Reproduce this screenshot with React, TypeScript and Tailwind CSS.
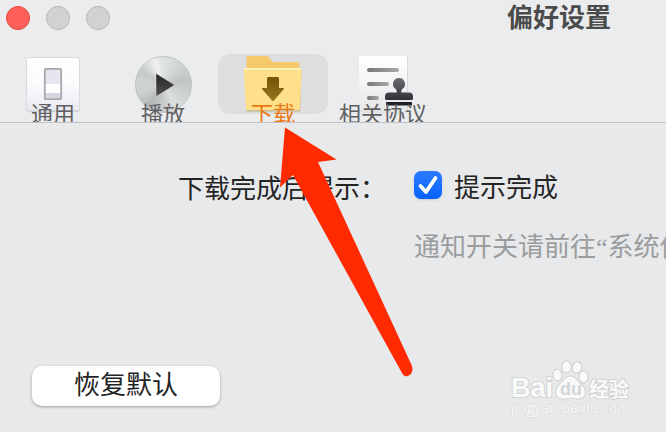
import React, { useState } from "react";

function GeneralIcon() {
  return (
    <svg width="60" height="60" viewBox="0 0 60 60" aria-hidden="true">
      <defs>
        <linearGradient id="general-plate" x1="0" y1="0" x2="0" y2="1">
          <stop offset="0" stopColor="#ffffff" />
          <stop offset="0.5" stopColor="#fbfbfd" />
          <stop offset="1" stopColor="#e9e9f1" />
        </linearGradient>
      </defs>
      <rect x="3.5" y="4.5" width="53" height="53" rx="2" fill="#b9b9bd" />
      <rect x="3.5" y="3.5" width="53" height="53" rx="2" fill="url(#general-plate)" stroke="#d9dadd" />
      <rect x="22" y="15" width="16" height="30" fill="#e6e6ee" />
      <rect x="22" y="30" width="16" height="9" fill="#ffffff" />
      <rect x="22" y="39" width="16" height="6" fill="#d6d5e2" />
      <rect x="21.8" y="14.8" width="16.4" height="30.4" rx="0.8" fill="none" stroke="#a9a9ab" strokeWidth="1.8" />
    </svg>
  );
}

function PlayIcon() {
  return (
    <div className="relative flex size-[60px] items-center justify-center">
      <div className="size-[57px] rounded-full border border-[#c0c3c4] bg-[conic-gradient(from_0deg,#dfe2e2,#d0d3d4_12%,#c0c4c5_22%,#cfd2d3_32%,#dcdedf_42%,#c8cccc_50%,#b4b9ba_60%,#cfd2d3_70%,#cdd1d1_78%,#c6cacb_84%,#eff0f0_94%,#dfe2e2)]" />
      <svg className="absolute inset-0" width="60" height="60" viewBox="0 0 60 60" aria-hidden="true">
        <defs>
          <linearGradient id="play-fill" x1="0" y1="0" x2="0" y2="1">
            <stop offset="0" stopColor="#262626" />
            <stop offset="1" stopColor="#505050" />
          </linearGradient>
        </defs>
        <path d="M23 20.500Q23 19.500 24 20L41 30.500Q41.500 31 41 31.500L24 42Q23 42.500 23 41.500Z" fill="url(#play-fill)" stroke="#e4e6e6" strokeWidth="0.500" />
      </svg>
    </div>
  );
}

function DownloadIcon() {
  return (
    <svg width="60" height="60" viewBox="0 0 60 60" aria-hidden="true">
      <defs>
        <linearGradient id="folder-arrow" x1="0" y1="0" x2="0" y2="1">
          <stop offset="0" stopColor="#735306" />
          <stop offset="1" stopColor="#96771d" />
        </linearGradient>
      </defs>
      <path d="M3.500 4Q3.500 2 5.500 2H23.500Q25 2 26 3.500L29.500 8H54.500Q56.500 8 56.500 10V18H3.500Z" fill="#f5c869" />
      <path d="M1.500 15.500H58.500L57.300 56.500Q57.200 57.500 56 57.500H4.500Q3.300 57.500 3.200 56.500Z" fill="#a7955f" opacity="0.6" />
      <path d="M0.700 15Q0.700 14 1.700 14H57.800Q58.800 14 58.800 15L57 55Q57 56.300 55.700 56.300H4.300Q3.100 56.300 3 55Z" fill="#fee08b" />
      <path d="M1.500 14.700H58" stroke="#fff6c8" strokeWidth="1.400" />
      <path d="M25.500 23H34.500Q36 23 36 24.500V34H40.500Q41.500 34 40.800 35L31 46.500Q30 47.500 29 46.500L19 35Q18.500 34 19.500 34H24V24.500Q24 23 25.500 23Z" fill="url(#folder-arrow)" />
    </svg>
  );
}

function AgreementIcon() {
  return (
    <svg width="60" height="60" viewBox="0 0 60 60" aria-hidden="true">
      <defs>
        <linearGradient id="paper" x1="0" y1="0" x2="0" y2="1">
          <stop offset="0" stopColor="#ffffff" />
          <stop offset="1" stopColor="#e6e7e9" />
        </linearGradient>
        <linearGradient id="line" x1="0" y1="0" x2="1" y2="0">
          <stop offset="0" stopColor="#777778" />
          <stop offset="1" stopColor="#aaaaac" />
        </linearGradient>
        <linearGradient id="stamp" x1="0" y1="0" x2="0" y2="1">
          <stop offset="0" stopColor="#6d6d70" />
          <stop offset="1" stopColor="#303036" />
        </linearGradient>
      </defs>
      <rect x="6" y="2.500" width="49" height="56" rx="1" fill="#d9dadc" />
      <rect x="6" y="2" width="48" height="55.500" rx="1" fill="url(#paper)" />
      <rect x="14" y="14" width="32" height="4" rx="2" fill="url(#line)" />
      <rect x="14" y="28" width="22" height="4" rx="2" fill="url(#line)" />
      <rect x="14" y="42" width="12" height="4" rx="2" fill="url(#line)" />
      <path d="M46 24a6 6 0 0 1 3.300 11Q48 36 48.300 38.500H56Q60 38.500 60 42.500V44.500Q60 46 58.500 46H33.500Q32 46 32 44.500V42.500Q32 38.500 36 38.500H43.700Q44 36 42.700 35A6 6 0 0 1 46 24Z" fill="url(#stamp)" />
      <rect x="33" y="48" width="26" height="3.500" rx="0.500" fill="#1f1f24" />
    </svg>
  );
}

const tabs = [
  { label: "通用", Icon: GeneralIcon },
  { label: "播放", Icon: PlayIcon },
  { label: "下载", Icon: DownloadIcon },
  { label: "相关协议", Icon: AgreementIcon },
];

function Watermark() {
  return (
    <svg width="128" height="60" viewBox="0 0 128 60" role="img" aria-label="Baidu 经验 jingyan.baidu.com">
      <g fill="#f9fafa" stroke="#d3d4d6" strokeWidth="1.200">
        <ellipse cx="52.500" cy="15" rx="4.500" ry="6" transform="rotate(-8 52.500 15)" />
        <ellipse cx="61.500" cy="6.800" rx="4.700" ry="6" />
        <ellipse cx="72" cy="7.300" rx="4.700" ry="5.800" transform="rotate(10 72 7.300)" />
        <ellipse cx="78.500" cy="17" rx="4.700" ry="5.800" />
        <path d="M65.500 16C60 16 58.500 20.500 54.500 24C49 29 49 38 56.500 39C61 39.500 63 38 66 38C69 38 71 39.500 75 39C82 38 82 29 77 25C72.500 21 71 16 65.500 16Z" />
        <g fontWeight="700" paintOrder="stroke" strokeWidth="2">
          <text x="6" y="37" fontSize="27" className="font-['Liberation_Sans',sans-serif]">Bai</text>
          <text x="84" y="37" fontSize="20" className="font-['Noto_Sans_CJK_SC',sans-serif]">经验</text>
        </g>
      </g>
      <text x="66" y="35" textAnchor="middle" fontSize="18" fontWeight="700" fill="#d3d4d6" className="font-['Liberation_Sans',sans-serif]">du</text>
      <text x="6" y="53" fontSize="14" fill="#f8f9f9" stroke="#d9dadc" strokeWidth="1" paintOrder="stroke" className="font-['Open_Sans',sans-serif]">jingyan.baidu.com</text>
    </svg>
  );
}

export default function App() {
  const [selected, setSelected] = useState("下载");
  const [notify, setNotify] = useState(true);

  return (
    <main
      lang="zh-CN"
      className="relative flex min-h-screen flex-col overflow-hidden bg-[#e8e9eb] font-['Liberation_Serif','Noto_Sans_CJK_SC',sans-serif] text-[26px] leading-9 text-[#242424]"
    >
      <header className="h-[123px] shrink-0 overflow-hidden border-b border-[#c2c3c5] bg-[#ebecee]">
        <div className="flex h-[54px] items-start">
          <div className="flex w-[507px] shrink-0 gap-4 px-1.5 pt-1.5">
            <button aria-label="关闭" className="size-6 rounded-full border border-[#e2463f] bg-[#ff5f57]" />
            <button aria-label="最小化" className="size-6 rounded-full border border-[#b5b6b7] bg-[#d1d2d3]" />
            <button aria-label="缩放" className="size-6 rounded-full border border-[#b5b6b7] bg-[#d1d2d3]" />
          </div>
          <h1 className="pt-px font-bold whitespace-nowrap text-[#4a4b4b]">偏好设置</h1>
        </div>
        <nav className="-ml-0.5 flex">
          {tabs.map(({ label, Icon }) => (
            <button
              key={label}
              aria-pressed={selected === label}
              onClick={() => setSelected(label)}
              className={`flex w-[110px] shrink-0 flex-col items-center text-[22px] leading-8 whitespace-nowrap ${
                selected === label ? "text-[#ec7813]" : "text-[#5f6062]"
              }`}
            >
              <span className={`flex h-[60px] w-full justify-center rounded-xl ${selected === label ? "bg-[#dddee0]" : ""}`}>
                <Icon />
              </span>
              <span className="relative -mt-[15px]">{label}</span>
            </button>
          ))}
        </nav>
      </header>

      <section className="flex flex-1 flex-col justify-between pt-11 pb-[26px]">
        <div className="grid grid-cols-[386px_1fr] gap-x-7 gap-y-[22px]">
          <p className="pt-[5px] text-right whitespace-nowrap">下载完成后提示：</p>
          <div className="flex items-start gap-3 pt-1">
            <span className="relative flex size-7">
              <input
                id="notify"
                type="checkbox"
                checked={notify}
                onChange={(e) => setNotify(e.target.checked)}
                className="peer size-7 appearance-none rounded-[7px] bg-white shadow-sm checked:bg-linear-to-b checked:from-[#2a7cff] checked:to-[#0562fe]"
              />
              <svg className="pointer-events-none absolute inset-0 hidden peer-checked:block" width="28" height="28" viewBox="0 0 28 28" aria-hidden="true">
                <path d="M6.500 15L12 21L21.500 7" fill="none" stroke="white" strokeWidth="3.800" strokeLinecap="round" strokeLinejoin="round" />
              </svg>
            </span>
            <label htmlFor="notify" className="whitespace-nowrap">提示完成</label>
          </div>
          <p className="col-start-2 w-0 whitespace-nowrap text-[#9b9c9d]">通知开关请前往“系统偏好设置”</p>
        </div>
        <div className="px-8">
          <button className="h-10 w-[188px] rounded-[10px] bg-white shadow-[0_1px_3px_#00000050]">恢复默认</button>
        </div>
      </section>

      <svg className="pointer-events-none absolute top-[123px] left-[270px]" width="150" height="260" viewBox="0 0 150 260" aria-hidden="true">
        <path d="M15 4.500L66.500 36.500L48 39L142 243Q144 250 138 253Q134 254 132 250L23 52L10 64.500Z" fill="#ff2a00" />
      </svg>
      <div className="pointer-events-none absolute right-[33px] bottom-3">
        <Watermark />
      </div>
    </main>
  );
}
